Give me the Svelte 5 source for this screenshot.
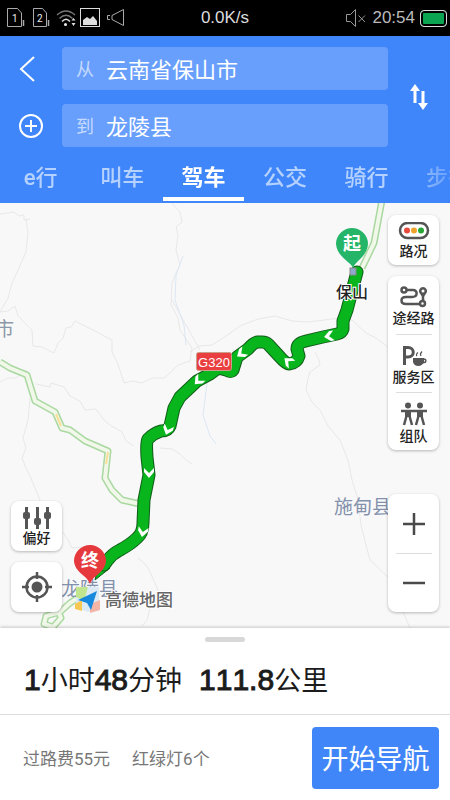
<script>
  let from = $state('云南省保山市');
  let to = $state('龙陵县');
  let active = $state('驾车');
  const modes = ['e行', '叫车', '驾车', '公交', '骑行', '步行'];

  const route =
    'M357 272L353 287L347 310L343 321V329Q342 333 337 334L323 337L306 341Q297 343 297 349L299 356Q297 363 289 364Q286 364 280 357L268 344Q266 342 262 342H257Q253 343 248 349L237 357L233 370Q231 373 226 370L218 368L210 374L197 381L180 397L174 408L170 426Q168 431 161 431Q154 433 148 439Q146 442 147 457L149 475L144 500L143 523Q143 533 137 538Q131 544 120 550Q112 554 107 561L104 565';
  const tail = 'M99 562L95 580L110 568Z';

  const boundaries = [
    'M0 214L8 213L14 212L19 216L24 215L24 220L30 219M26 219L28 232L26 252L19 268L12 283L8 298L0 312L8 311L15 306L18 316L24 322L32 330L33 346L42 347L54 353L58 343L63 338L66 328L71 327L75 321L87 327L97 332L106 337L112 340L112 352L118 364L124 383L133 381L142 383L152 378L164 378L170 373L178 365L190 361L192 348L184 336L180 330L178 318L171 305L172 283L176 273L180 265L176 250L178 235L176 227L182 222L180 212L172 203',
    'M36 384L50 387L51 383L64 387L70 396L80 401L85 410L96 409L104 420L110 425L122 432L126 441L134 446M160 448L172 449L180 454L186 460L192 464',
    'M30 398L28 420L23 438L26 448L22 458L26 468L30 476L40 500L36 515',
    'M190 352L199 346L212 345L226 336L240 326L258 319L275 316L292 321L308 322L324 320L340 318L352 320L366 333L376 338L388 347L439 390',
    'M315 352L319 360L320 365L310 372L308 378L306 390L312 402L320 410L328 426L340 440L348 460L352 480L358 500L361 525L366 545L370 560L388 577L410 628',
    'M200 350L186 325L172 300M0 382L8 378L16 378L26 370',
    'M63 532L68 540L72 548L82 547L90 552M138 558L146 565L150 572L158 590L150 608L147 620L142 626'
  ];
  const rivers = ['M183 256L176 275L175 300L184 325L186 345', 'M207 383L203 415L210 436L216 444'];
  const roads = [
    'M0 362L10 368L27 375L35 401L55 412L62 428L70 430L85 441L108 451L105 478L112 490L122 500L140 504',
    'M382 200L374 243L362 268',
    'M84 594L70 603L60 612L46 616L44 624L53 627L61 618L58 611'
  ];
  const arrows = [
    [330, 336, 80], [289, 362, 130], [242, 353, 55], [199, 380, 45],
    [168, 429, 20], [149, 472, 0], [143, 531, 10]
  ];
</script>

<div class="app">
  <div class="status">
    <div class="left">
      <svg width="130" height="24" viewBox="0 0 130 24" fill="none" stroke="#aaa" aria-hidden="true">
        <path d="M7.500 2.500H17.500L21.500 7V20.500H7.500ZM33.500 2.500H42.500L46.500 7V20.500H33.500Z" />
        <path d="M23.500 14V20M48.500 14V20" stroke-width="1.500" />
        <text x="12" y="16" fill="#eee" stroke="none">1</text>
        <text x="37" y="16" fill="#eee" stroke="none">2</text>
        <path d="M57 9Q66 1 75 9M59.500 12.500Q66 6 72.500 12.500" stroke="#777" stroke-width="1.500" />
        <path d="M62 15.500Q66 11 70 15.500" stroke="#ddd" stroke-width="1.500" />
        <circle cx="65.500" cy="18.500" r="1.500" fill="#eee" stroke="none" />
        <path d="M73.500 12L75.500 14.500H71.500ZM73.500 20L75.500 17H71.500Z" fill="#ddd" stroke="none" />
        <rect x="80.500" y="2.500" width="19" height="18" stroke="#ddd" />
        <path d="M83 19V14L87 11L90 13L93 10L97 15V19Z" fill="#ddd" stroke="none" />
        <path d="M123.500 3.500V19.500L112 13.500V9.500ZM110 9.500H107.500V13.500H110" />
      </svg>
    </div>
    <span class="speed">0.0K/s</span>
    <div class="right">
      <svg width="22" height="20" viewBox="0 0 22 20" fill="none" stroke="#999" aria-hidden="true">
        <path d="M1.500 6.500H5.500L10.500 1.500V18.500L5.500 13.500H1.500ZM13.500 7.500L20 14M20 7.500L13.500 14" />
      </svg>
      <time>20:54</time>
      <span class="battery"></span>
    </div>
  </div>

  <header>
    <div class="search">
      <button class="back" aria-label="返回">
        <svg width="18" height="26" viewBox="0 0 18 26" fill="none" stroke="#fff" stroke-width="2"><path d="M16 1L3 13L16 25" /></svg>
      </button>
      <label class="field"><span>从</span><input bind:value={from} /></label>
      <button class="swap" aria-label="交换起点和终点" onclick={() => ([from, to] = [to, from])}>
        <svg width="20" height="28" viewBox="0 0 20 28" fill="none" stroke="#fff" stroke-width="3">
          <path d="M6 6V20M14 8V22" /><path d="M1 8L6 1L11 8ZM9 20L14 27L19 20Z" fill="#fff" stroke="none" />
        </svg>
      </button>
      <button class="add" aria-label="添加途经点">
        <svg width="26" height="26" viewBox="0 0 26 26" fill="none" stroke="#fff" stroke-width="2"><circle cx="13" cy="13" r="11" /><path d="M13 7V19M7 13H19" /></svg>
      </button>
      <label class="field"><span>到</span><input bind:value={to} /></label>
    </div>
    <nav>
      {#each modes as mode}
        <button class:active={mode === active} onclick={() => (active = mode)}>{mode}</button>
      {/each}
    </nav>
  </header>

  <main>
    <svg class="map" viewBox="0 203 450 425" preserveAspectRatio="xMidYMid slice">
      <g fill="none" stroke-linejoin="round">
        {#each boundaries as d}<path {d} stroke="#e8e8ea" />{/each}
        {#each rivers as d}<path {d} stroke="#dbe7f2" />{/each}
        {#each roads as d}
          <path {d} stroke="#a9d8a0" stroke-width="7" />
          <path {d} stroke="#f1f8e9" stroke-width="4" />
        {/each}
        <path d="M56 414L61 426M108 452L106 464" stroke="#f8df9a" stroke-width="2" />
      </g>
      <text class="place" x="-5" y="336">市</text>
      <text class="place county" x="334" y="514">施甸县</text>
      <text class="place county" x="61" y="596">龙陵县</text>
      <path d={tail} fill="#08b51c" stroke="#125c1a" />
      <g fill="none" stroke-linejoin="round" stroke-linecap="round">
        <path d={route} stroke="#125c1a" stroke-width="13" />
        <path d={route} stroke="#08b51c" stroke-width="11" />
        {#each arrows as [x, y, a]}
          <path d="M-5 -4L0 1L5 -4V0L0 6L-5 0Z" fill="#fff" transform="translate({x} {y}) rotate({a})" />
        {/each}
      </g>

      <rect x="196.500" y="352.500" width="35" height="18" rx="2" fill="#ea3f40" stroke="#c9a08c" />
      <text class="shield" x="214" y="367" text-anchor="middle">G320</text>

      <rect x="350" y="268" width="6" height="7" fill="#90a9cc" stroke="#888" />
      <path d="M353 268C350 261 337 257 336 244A16 16 0 0 1 368 244C367 257 356 260 353 268Z" fill="#25b569" />
      <text class="pin" x="352" y="250" text-anchor="middle">起</text>
      <text class="town" x="336" y="298">保山</text>

      <g>
        <path d="M76 587H99V608L88 612L76 608Z" fill="#dceaf5" />
        <path d="M76 587H88L84 601L76 597Z" fill="#c0e58e" />
        <path d="M75 604L82 600V611L75 609Z" fill="#f7c953" />
        <path d="M90 604L100 600V610L90 613Z" fill="#f4b5a7" />
        <path d="M97 591L91 610L87 603L78 600Z" fill="#1689dd" />
      </g>
      <path d="M90 584C87 575 75 573 74 561A16 16 0 0 1 106 561C105 573 93 575 90 584Z" fill="#e6393d" />
      <text class="pin" x="90" y="567" text-anchor="middle">终</text>
      <text class="brand" x="105" y="606">高德地图</text>
    </svg>

    <div class="tools start">
      <button class="card">
        <svg width="30" height="22" viewBox="0 0 30 22" fill="#555"><path d="M3 0H6V22H3ZM14 0H17V22H14ZM24 0H27V22H24Z" /><rect x="1" y="5" width="7" height="7" rx="2" /><rect x="12" y="11" width="7" height="7" rx="2" /><rect x="22" y="5" width="7" height="7" rx="2" /></svg>
        偏好
      </button>
      <button class="card locate" aria-label="定位">
        <svg width="30" height="30" viewBox="0 0 30 30" fill="none" stroke="#555" stroke-width="2.500"><circle cx="15" cy="15" r="10.500" /><circle cx="15" cy="15" r="5.500" fill="#555" stroke="none" /><path d="M15 0V7M15 23V30M0 15H7M23 15H30" /></svg>
      </button>
    </div>

    <div class="tools end">
      <button class="card">
        <svg width="32" height="20" viewBox="0 0 32 20"><rect x="2" y="1" width="28" height="15" rx="7.500" fill="none" stroke="#555" stroke-width="2.500" /><circle cx="9" cy="8.500" r="3" fill="#e8493d" /><circle cx="16" cy="8.500" r="3" fill="#eea42c" /><circle cx="23" cy="8.500" r="3" fill="#27a535" /></svg>
        路况
      </button>
      <div class="card group">
        <button>
          <svg width="28" height="22" viewBox="0 0 28 22" fill="none" stroke="#555" stroke-width="2.500"><circle cx="4" cy="4" r="2.500" /><path d="M6 4H13C18 4 18 11 12 11H6C0 11 0 18 6 18H19M23 9V14" /><circle cx="22.500" cy="17.500" r="2.500" /><path d="M23 12L19.500 7A4 4 0 1 1 26.500 7Z" fill="#555" stroke="none" /><circle cx="23" cy="5" r="1.500" fill="#fff" stroke="none" /></svg>
          途经路
        </button>
        <button>
          <svg width="28" height="22" viewBox="0 0 28 22" fill="none" stroke="#555" stroke-width="3"><path d="M4.500 20V2.500H8C15 2.500 15 12 8 12H4.500" /><path d="M13 13H24V17Q22 21 18.500 21Q14 21 13 17Z" fill="#555" stroke="none" /><path d="M23 14Q27 14 25.500 17L22 18" stroke-width="1.500" /><path d="M17 11Q15.500 9.500 18 7.500M21 11Q19.500 9 22 6.500" stroke-width="1.200" /></svg>
          服务区
        </button>
        <button>
          <svg width="28" height="24" viewBox="0 0 28 24" fill="none" stroke="#555" stroke-width="2.500"><circle cx="8" cy="3.500" r="3" fill="#555" stroke="none" /><circle cx="20" cy="3.500" r="3" fill="#555" stroke="none" /><path d="M1 9H27" /><path d="M5 9H11V15H5ZM17 9H23V15H17Z" fill="#555" stroke="none" /><path d="M6.500 14L4 23M9.500 14L12 23M18.500 14L16 23M21.500 14L24 23" /></svg>
          组队
        </button>
      </div>
      <div class="card group zoom">
        <button aria-label="放大"><svg width="22" height="22" viewBox="0 0 22 22" stroke="#4a4a4a" stroke-width="2.500"><path d="M11 0V22M0 11H22" /></svg></button>
        <button aria-label="缩小"><svg width="22" height="22" viewBox="0 0 22 22" stroke="#4a4a4a" stroke-width="2.500"><path d="M0 11H22" /></svg></button>
      </div>
    </div>
  </main>

  <section class="sheet">
    <div class="handle"></div>
    <h1><span><b>1</b>小时<b>48</b>分钟</span><span><b>111.8</b>公里</span></h1>
    <div class="bottom">
      <span>过路费55元</span>
      <span>红绿灯6个</span>
      <button>开始导航</button>
    </div>
  </section>
</div>

<style>
  :global(body) { margin: 0; }
  .app {
    display: flex;
    flex-direction: column;
    min-height: 100vh;
    overflow: hidden;
    background: #fff;
    font-family: Roboto, 'Noto Sans CJK SC', sans-serif;
  }
  .app * { box-sizing: border-box; }
  button { margin: 0; padding: 0; border: 0; background: none; color: inherit; font: inherit; cursor: pointer; }
  svg { display: block; flex: none; }

  .status {
    display: grid;
    grid-template-columns: 1fr auto 1fr;
    align-items: center;
    height: 36px;
    background: #000;
    color: #ddd;
  }
  .status .left { display: flex; }
  .status .left text { font-size: 10px; }
  .speed { font-family: 'Liberation Sans', sans-serif; font-size: 17px; }
  .right { display: flex; justify-content: flex-end; align-items: center; gap: 5px; padding-right: 3px; }
  time { font-family: 'Liberation Sans', sans-serif; font-size: 17px; color: #bbb; }
  .battery {
    width: 27px;
    height: 17px;
    border: 1px solid #ddd;
    border-radius: 4px;
    background: #0ba552;
    box-shadow: inset 0 0 0 2px #000;
  }

  header { background: #4086fb; color: #fff; padding-top: 11px; }
  .search {
    display: grid;
    grid-template-columns: 62px 1fr 62px;
    grid-auto-rows: 43px;
    row-gap: 14px;
  }
  .search button { display: grid; align-items: center; padding-left: 18px; }
  .search .swap { grid-column: 3; grid-row: 1 / 3; justify-content: center; padding: 0; }
  .field {
    display: flex;
    align-items: center;
    gap: 12px;
    min-width: 0;
    padding: 0 14px 2px;
    border-radius: 4px;
    background: #699ffc;
  }
  .field span { font-size: 18px; color: #c4dafe; }
  .field input {
    flex: 1;
    min-width: 0;
    padding: 0;
    border: 0;
    outline: 0;
    background: none;
    color: #fff;
    font: inherit;
    font-size: 22px;
  }
  nav {
    display: flex;
    height: 48px;
    margin-top: 8px;
    overflow: hidden;
    -webkit-mask-image: linear-gradient(to right, #000 88%, #0005);
    mask-image: linear-gradient(to right, #000 88%, #0005);
  }
  nav button {
    flex: 0 0 18.1%;
    padding-top: 4px;
    border-bottom: 4px solid transparent;
    margin-bottom: 2px;
    color: #b5d2fe;
    font-size: 22px;
    font-weight: 500;
    line-height: 32px;
    white-space: nowrap;
  }
  nav .active { border-color: #fff; color: #fff; font-weight: 700; }

  main {
    position: relative;
    display: flex;
    flex: 1;
    justify-content: space-between;
    padding: 12px 11px 16px;
    background: #f8f8f9;
  }
  .map { position: absolute; inset: 0; width: 100%; height: 100%; }
  .place { font-size: 19px; fill: #8d98a8; }
  .county { fill: #8391ac; }
  .shield { font-family: 'Liberation Sans', sans-serif; font-size: 13px; fill: #fff; }
  .pin { font-size: 18px; font-weight: 700; fill: #fff; }
  .town { font-size: 16px; font-weight: 500; fill: #222; stroke: #fff; stroke-width: 2px; paint-order: stroke; }
  .brand { font-size: 17px; font-weight: 500; fill: #666; stroke: #fff; stroke-width: 2px; paint-order: stroke; }

  .tools { position: relative; display: flex; flex-direction: column; gap: 11px; width: 51px; }
  .start { justify-content: flex-end; }
  .card {
    display: flex;
    flex-direction: column;
    align-items: center;
    justify-content: center;
    min-height: 50px;
    border-radius: 8px;
    background: #fff;
    box-shadow: 0 1px 3px #0004;
    color: #222;
    font-size: 14px;
    font-weight: 500;
    line-height: 18px;
    white-space: nowrap;
  }
  .tools > button { padding-top: 2px; }
  .tools > .locate { padding: 0; }
  .group { justify-content: flex-start; }
  .group button {
    display: flex;
    flex-direction: column;
    align-items: center;
    justify-content: center;
    gap: 1px;
    width: 36px;
    height: 58px;
    padding-top: 3px;
  }
  .group button + button { border-top: 1px solid #ddd; }
  .zoom { margin-top: auto; }
  .zoom button { height: 59px; padding: 0; }

  .sheet { position: relative; background: #fff; box-shadow: 0 -1px 3px #0003; }
  .handle { width: 40px; height: 5px; margin: 9px auto 0; border-radius: 3px; background: #d8d8d8; }
  h1 {
    display: flex;
    align-items: center;
    gap: 17px;
    height: 73px;
    margin: 0;
    padding: 0 24px;
    border-bottom: 1px solid #ddd;
    color: #1c1c1c;
    font-size: 27px;
    font-weight: 400;
    font-kerning: none;
    white-space: nowrap;
  }
  h1 b {
    font-family: 'Liberation Sans', sans-serif;
    font-size: 30px;
    font-weight: 400;
    -webkit-text-stroke: 1px #1c1c1c;
  }
  .bottom {
    display: flex;
    align-items: center;
    gap: 22px;
    height: 85px;
    padding: 0 11px 0 23px;
    color: #777;
    font-size: 17px;
    white-space: nowrap;
  }
  .bottom button {
    width: 127px;
    height: 62px;
    margin-left: auto;
    border-radius: 4px;
    background: #4086f8;
    color: #fff;
    font-size: 27px;
  }
</style>
